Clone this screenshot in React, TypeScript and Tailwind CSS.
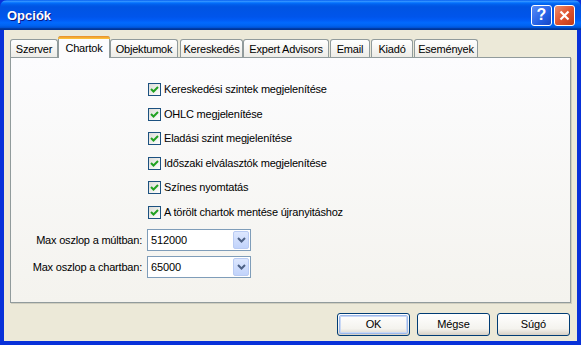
import React from "react";

const font = { fontFamily: '"Liberation Sans", Arial, sans-serif' };

function Check({ label, h }: { label: string; h: string }) {
  return (
    <div className={`flex items-center ${h}`}>
      <div className="w-[13px] h-[13px] border border-[#1C5180] bg-[linear-gradient(135deg,#DCDCD7,#FFFFFF)] flex items-center justify-center">
        <svg width="9" height="9" viewBox="0 0 9 9">
          <path d="M1 4 L3.5 6.5 L8 2" stroke="#21A121" strokeWidth="2" fill="none" />
        </svg>
      </div>
      <span className="ml-[3px] text-[11px] tracking-[-0.2px] leading-none text-black">{label}</span>
    </div>
  );
}

function Combo({ value }: { value: string }) {
  return (
    <div className="w-[104px] h-[22px] border border-[#7F9DB9] bg-white flex items-center">
      <span className="flex-1 pl-[3px] text-[11px] tracking-[-0.1px] leading-none text-black">{value}</span>
      <div className="w-[16px] h-[18px] mr-[1px] rounded-[2px] border border-[#B9CBF3] bg-[linear-gradient(to_bottom,#DDE7FE,#C1D3FB)] flex items-center justify-center">
        <svg width="9" height="6" viewBox="0 0 9 6">
          <path d="M1 1 L4.5 4.5 L8 1" stroke="#4D6185" strokeWidth="2" fill="none" />
        </svg>
      </div>
    </div>
  );
}

function Tab({ label, w }: { label: string; w: string }) {
  return (
    <div
      className={`${w} h-[19px] mt-[3px] border border-b-0 border-[#919B9C] rounded-t-[3px] bg-[linear-gradient(to_bottom,#FFFFFF,#ECEBE6)] flex items-center justify-center text-[11px] tracking-[-0.2px] leading-none text-black`}
    >
      {label}
    </div>
  );
}

function Btn({ label, def }: { label: string; def?: boolean }) {
  return (
    <div className="w-[73px] h-[23px] border border-[#003C74] rounded-[3px] bg-[linear-gradient(to_bottom,#FFFFFF,#F4F3EE_70%,#D6D0C5)] flex items-center justify-center p-[1px]">
      <div
        className={`w-full h-full rounded-[2px] flex items-center justify-center text-[11px] tracking-[-0.1px] leading-none text-black ${
          def ? "border border-[#9DB9EB] shadow-[inset_0_0_0_1px_#C9D8F5]" : ""
        }`}
      >
        {label}
      </div>
    </div>
  );
}

export default function App() {
  return (
    <div style={font} className="w-[581px] h-[345px] flex flex-col bg-[#0831D9]">
      <div className="h-[30px] rounded-t-[7px] bg-[linear-gradient(to_bottom,#0058EE_0%,#3593FF_4%,#288EFF_6%,#127DFF_8%,#036FFC_10%,#0262EE_14%,#0057E5_20%,#0054E3_24%,#0055EB_56%,#005BF5_66%,#026AFE_76%,#0062EF_86%,#0052D6_92%,#0040AB_94%,#003092_100%)] flex items-center pl-[7px] pr-[6px]">
        <span className="text-white font-bold text-[13px] leading-none [text-shadow:1px_1px_0_#0A1883]">
          Opciók
        </span>
        <div className="flex-1" />
        <div className="w-[21px] h-[21px] rounded-[3px] border border-white bg-[linear-gradient(135deg,#5A8CF7,#2460E5_60%,#1746C4)] flex items-center justify-center text-white font-bold text-[16px] leading-none">
          ?
        </div>
        <div className="w-[21px] h-[21px] ml-[2px] rounded-[3px] border border-white bg-[linear-gradient(135deg,#EB8F6F,#E0532F_50%,#C23A17)] flex items-center justify-center">
          <svg width="11" height="11" viewBox="0 0 11 11">
            <path d="M1.5 1.5 L9.5 9.5 M9.5 1.5 L1.5 9.5" stroke="#FFFFFF" strokeWidth="2.2" />
          </svg>
        </div>
      </div>
      <div className="flex-1 mx-[4px] mb-[4px] bg-[#ECE9D8] flex flex-col px-[6px] pt-[6px]">
        <div className="flex h-[21px] items-start">
          <Tab label="Szerver" w="w-[48px]" />
          <div className="w-[52px] h-[22px] -mb-[1px] border border-b-0 border-[#919B9C] rounded-t-[3px] bg-[#FCFCFE] flex flex-col relative z-10">
            <div className="h-[3px] -mx-[1px] -mt-[1px] rounded-t-[3px] bg-[linear-gradient(to_bottom,#E68B2C,#FFC83C)]" />
            <div className="flex-1 flex items-center justify-center text-[11px] tracking-[-0.2px] leading-none text-black">
              Chartok
            </div>
          </div>
          <Tab label="Objektumok" w="w-[68px]" />
          <div className="w-[2px]" />
          <Tab label="Kereskedés" w="w-[63px]" />
          <Tab label="Expert Advisors" w="w-[86px]" />
          <div className="w-[1px]" />
          <Tab label="Email" w="w-[40px]" />
          <div className="w-[1px]" />
          <Tab label="Kiadó" w="w-[42px]" />
          <div className="w-[1px]" />
          <Tab label="Események" w="w-[64px]" />
        </div>
        <div className="h-[246px] border border-[#919B9C] bg-[linear-gradient(to_bottom,#FCFCFE,#F4F3EE)] shadow-[1px_1px_0_#D0CEBF] flex flex-col">
          <div className="pl-[137px] pt-[19px] flex flex-col">
            <Check label="Kereskedési szintek megjelenítése" h="h-[25px]" />
            <Check label="OHLC megjelenítése" h="h-[24px]" />
            <Check label="Eladási szint megjelenítése" h="h-[25px]" />
            <Check label="Időszaki elválasztók megjelenítése" h="h-[24px]" />
            <Check label="Színes nyomtatás" h="h-[25px]" />
            <Check label="A törölt chartok mentése újranyitáshoz" h="h-[24px]" />
          </div>
          <div className="mt-[5px] flex flex-col gap-[5px]">
            <div className="flex items-center">
              <span className="w-[131px] text-right text-[11px] tracking-[-0.2px] leading-none text-black">Max oszlop a múltban:</span>
              <div className="ml-[5px]">
                <Combo value="512000" />
              </div>
            </div>
            <div className="flex items-center">
              <span className="w-[131px] text-right text-[11px] tracking-[-0.2px] leading-none text-black">Max oszlop a chartban:</span>
              <div className="ml-[5px]">
                <Combo value="65000" />
              </div>
            </div>
          </div>
        </div>
        <div className="flex justify-end gap-[7px] mt-[10px] pr-[1px]">
          <Btn label="OK" def />
          <Btn label="Mégse" />
          <Btn label="Súgó" />
        </div>
      </div>
    </div>
  );
}
